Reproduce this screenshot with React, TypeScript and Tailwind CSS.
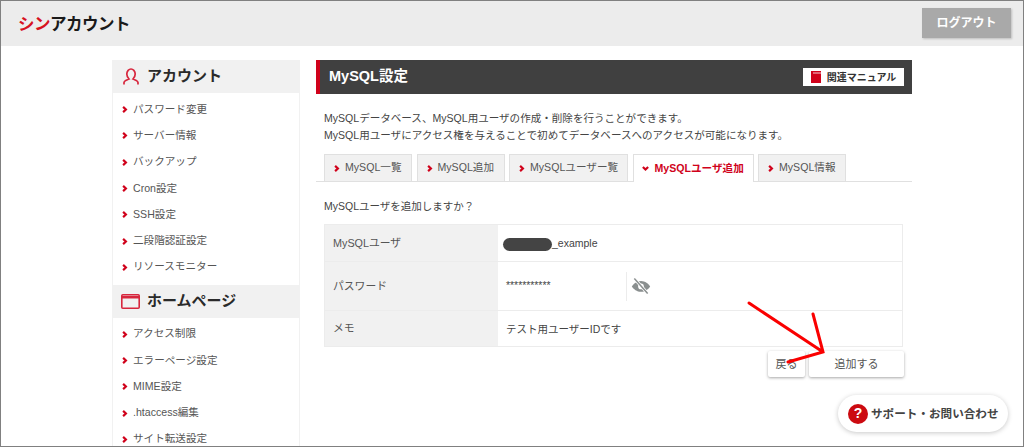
import React from "react";

function Chevron({ down = false }: { down?: boolean }) {
  return (
    <svg width="7" height="7" viewBox="0 0 8 8" className="shrink-0">
      <path
        d={down ? "M1 2.2 L4 5.2 L7 2.2" : "M2.4 1 L5.6 4 L2.4 7"}
        fill="none"
        stroke="#d0021b"
        strokeWidth="2.5"
      />
    </svg>
  );
}

function SideItem({ label }: { label: string }) {
  return (
    <li className="flex h-[26.3px] items-center gap-[5px] pl-[8px] text-[10.6px] text-[#555]">
      <Chevron />
      <span>{label}</span>
    </li>
  );
}

function SideHead({ icon, label }: { icon: React.ReactNode; label: string }) {
  return (
    <div className="flex h-[33px] items-center bg-[#f1f1f1] pl-[8px] text-[15px] font-bold text-[#2a2a2a]">
      <span className="flex w-[26px] items-center">{icon}</span>
      {label}
    </div>
  );
}

function Tab({ label, w, active = false }: { label: string; w: string; active?: boolean }) {
  return (
    <div
      className={
        active
          ? `${w} relative z-10 -mb-px flex h-[28px] items-center gap-[6px] whitespace-nowrap border border-b-0 border-[#e0e0e0] bg-white pl-[8px] text-[10.6px] font-bold text-[#d0021b]`
          : `${w} flex h-[27px] items-center gap-[5px] whitespace-nowrap border border-b-0 border-[#e0e0e0] bg-[#f1f1f1] pl-[8px] text-[10.6px] text-[#555]`
      }
    >
      <Chevron down={active} />
      <span>{label}</span>
    </div>
  );
}

function Row({ head, h, children }: { head: string; h: string; children: React.ReactNode }) {
  return (
    <div className={`flex ${h} border-b border-[#ececec] last:border-b-0`}>
      <div className="flex w-[173px] shrink-0 items-center bg-[#f1f1f1] pl-[8px] text-[10.8px] text-[#555]">
        {head}
      </div>
      <div className="flex flex-1 items-center pl-[8px] pt-[2px] text-[10.5px] text-[#444]">{children}</div>
    </div>
  );
}

export default function App() {
  return (
    <div
      className="relative h-[447px] w-[1024px] overflow-hidden border border-[#808080] bg-white"
      style={{ fontFamily: '"Liberation Sans", "Noto Sans CJK JP", sans-serif' }}
    >
      <header className="flex h-[45px] items-center justify-between bg-[#ececec] pl-[17px] pr-[12px]">
        <div className="mt-[2px] text-[16.5px] font-bold tracking-[-0.5px] text-[#1a1a1a]">
          <span className="text-[#d7121f]">シン</span>アカウント
        </div>
        <button className="-mt-[1px] flex h-[30px] w-[89px] items-center justify-center bg-[#a9a9a9] text-[12px] font-bold text-white shadow-[1px_1px_2px_rgba(0,0,0,0.2)]">
          ログアウト
        </button>
      </header>

      <div className="flex pl-[111px] pt-[14px]">
        <aside className="w-[188px] shrink-0 border-x border-[#f1f1f1]">
          <SideHead
            label="アカウント"
            icon={
              <svg width="16" height="17" viewBox="0 0 16 17" fill="none" stroke="#d7263d" strokeWidth="1.7" className="ml-[2px]">
                <path d="M1 16.5 V14.5 C1 12.8 3.5 12.2 6 11 C4.5 9.5 3.8 8 3.8 6 C3.8 3 6 1 8 1 C10 1 12.2 3 12.2 6 C12.2 8 11.5 9.5 10 11 C12.5 12.2 15 12.8 15 14.5 V16.5" />
              </svg>
            }
          />
          <ul className="pb-[4.5px] pt-[3.5px]">
            {["パスワード変更", "サーバー情報", "バックアップ", "Cron設定", "SSH設定", "二段階認証設定", "リソースモニター"].map((l) => (
              <SideItem key={l} label={l} />
            ))}
          </ul>
          <SideHead
            label="ホームページ"
            icon={
              <svg width="19" height="15" viewBox="0 0 19 15" fill="none" stroke="#d7263d">
                <rect x="0.8" y="0.8" width="17.4" height="13.4" rx="1" strokeWidth="1.6" />
                <path d="M1 3.2 H18" strokeWidth="2.6" />
              </svg>
            }
          />
          <ul className="pt-[3px]">
            {["アクセス制限", "エラーページ設定", "MIME設定", ".htaccess編集", "サイト転送設定"].map((l) => (
              <SideItem key={l} label={l} />
            ))}
          </ul>
        </aside>

        <main className="ml-[16px] w-[596px] shrink-0">
          <div className="flex h-[34px] items-center justify-between border-l-[4px] border-[#d0021b] bg-[#404040] pl-[9px] pr-[8px]">
            <h1 className="text-[14.5px] font-bold text-white">MySQL設定</h1>
            <div className="flex h-[18px] w-[101px] items-center justify-center gap-[6px] bg-white text-[10px] font-bold text-[#333]">
              <svg width="10" height="12" viewBox="0 0 10 12">
                <path d="M0 0 H10 V12 H0 Z" fill="#d0021b" />
                <path d="M2 2 H10" stroke="#fff" strokeWidth="0.8" />
              </svg>
              関連マニュアル
            </div>
          </div>

          <div className="px-[8px] pt-[16px] text-[10.55px] leading-[17px] text-[#444]">
            <p>MySQLデータベース、MySQL用ユーザの作成・削除を行うことができます。</p>
            <p>MySQL用ユーザにアクセス権を与えることで初めてデータベースへのアクセスが可能になります。</p>
          </div>

          <div className="mt-[10px] flex h-[28px] items-end gap-[4.5px] border-b border-[#e0e0e0] pl-[8px]">
            <Tab label="MySQL一覧" w="w-[88px]" />
            <Tab label="MySQL追加" w="w-[88px]" />
            <Tab label="MySQLユーザー覧" w="w-[119px]" />
            <Tab label="MySQLユーザ追加" w="w-[121px]" active />
            <Tab label="MySQL情報" w="w-[88px]" />
          </div>

          <p className="px-[8px] pt-[16px] text-[10.5px] leading-[17px] text-[#444]">MySQLユーザを追加しますか？</p>

          <div className="mx-[8px] mt-[9px] w-[579px] border border-[#ececec]">
            <Row head="MySQLユーザ" h="h-[37px]">
              <span className="-ml-[3px] inline-block h-[13px] w-[49px] rounded-full bg-[#444]" />
              <span>_example</span>
            </Row>
            <Row head="パスワード" h="h-[49px]">
              <span className="-mt-[2px] w-[120px] text-[10.4px] text-[#444]">***********</span>
              <span className="-mt-[2px] h-[29px] w-px bg-[#ececec]" />
              <svg width="20" height="20" viewBox="0 0 24 24" className="-mt-[2px] ml-[4px]">
                <path
                  d="M12 6 C17 6 21 9.5 23 12.5 C21 15.5 17 19 12 19 C7 19 3 15.5 1 12.5 C3 9.5 7 6 12 6 Z"
                  fill="#8a8f8f"
                />
                <circle cx="12" cy="12.5" r="3.4" fill="#fff" />
                <path d="M4 3 L20 21" stroke="#fff" strokeWidth="3.6" />
                <path d="M4 3 L20 21" stroke="#8a8f8f" strokeWidth="1.8" />
              </svg>
            </Row>
            <Row head="メモ" h="h-[35px]">
              テスト用ユーザーIDです
            </Row>
          </div>

          <div className="mt-[4px] flex w-[588px] justify-end gap-[4px]">
            <button className="h-[26px] w-[37px] rounded-[2px] bg-white text-[11px] text-[#555] shadow-[0_1px_3px_rgba(0,0,0,0.35)]">
              戻る
            </button>
            <button className="h-[26px] w-[95px] rounded-[2px] bg-white text-[11px] text-[#555] shadow-[0_1px_3px_rgba(0,0,0,0.35)]">
              追加する
            </button>
          </div>
        </main>
      </div>

      <div className="absolute left-[837px] top-[394px] flex h-[37px] w-[170px] items-center gap-[3px] rounded-full bg-white pl-[10px] text-[11.6px] font-bold text-[#444] shadow-[0_1px_5px_rgba(0,0,0,0.22)]">
        <span className="flex h-[20px] w-[20px] items-center justify-center rounded-full bg-[#cc0a10] text-[14px] font-bold text-white">?</span>
        サポート・お問い合わせ
      </div>

      <svg className="pointer-events-none absolute left-0 top-0" width="1024" height="447" fill="none">
        <path
          d="M748 302 L822 351 M812 313 L822 351 L787 361"
          stroke="#fa0000"
          strokeWidth="3"
          strokeLinecap="round"
          strokeLinejoin="miter"
        />
      </svg>
    </div>
  );
}
